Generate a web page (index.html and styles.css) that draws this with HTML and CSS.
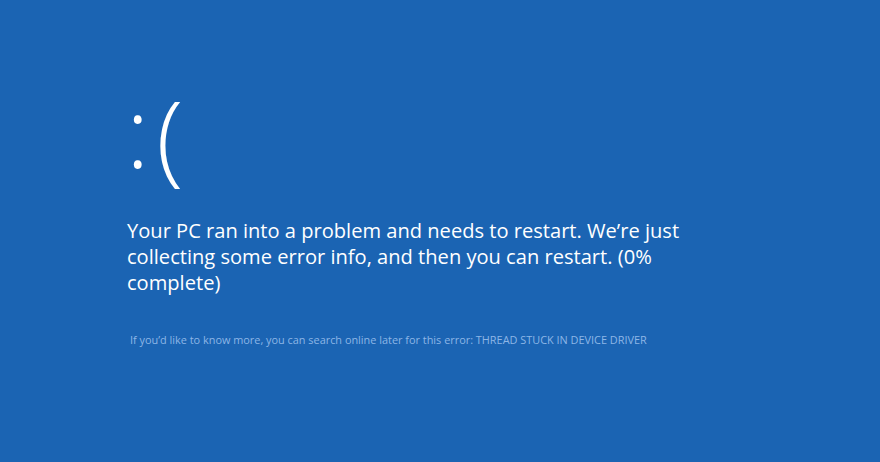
FILE: index.html
```html
<!DOCTYPE html>
<html lang="en">
<head>
    <meta charset="UTF-8" />
    <title>Your PC ran into a problem</title>
    <link rel="stylesheet" href="styles.css">
</head>
<body>
    <main class="screen">
        <div class="face"><span class="eyes">:</span><span class="mouth">(</span></div>
        <p class="message">Your PC ran into a problem and needs to restart. We’re just collecting some error info, and then you can restart. (0% complete)</p>
        <p class="details">If you’d like to know more, you can search online later for this error: THREAD STUCK IN DEVICE DRIVER</p>
    </main>
</body>
</html>
```
FILE: styles.css
```css
html, body {
    margin: 0;
    height: 100%;
}

body {
    background: #1b64b3;
    font-family: "Open Sans", "Noto Sans", sans-serif;
    color: #fff;
}

.screen {
    padding: 70px 0 0 126px;
}

.face {
    height: 120px;
    line-height: 120px;
    font-weight: 300;
}

.eyes {
    font-size: 98px;
    margin-right: 7px;
}

.mouth {
    font-size: 100px;
    line-height: 0;
    vertical-align: -5px;
}

.message {
    width: 580px;
    margin: 28px 0 0 1px;
    font-size: 20.1px;
    line-height: 26px;
}

.details {
    margin: 36px 0 0 4px;
    font-size: 10.9px;
    color: #8db6e6;
}
```
